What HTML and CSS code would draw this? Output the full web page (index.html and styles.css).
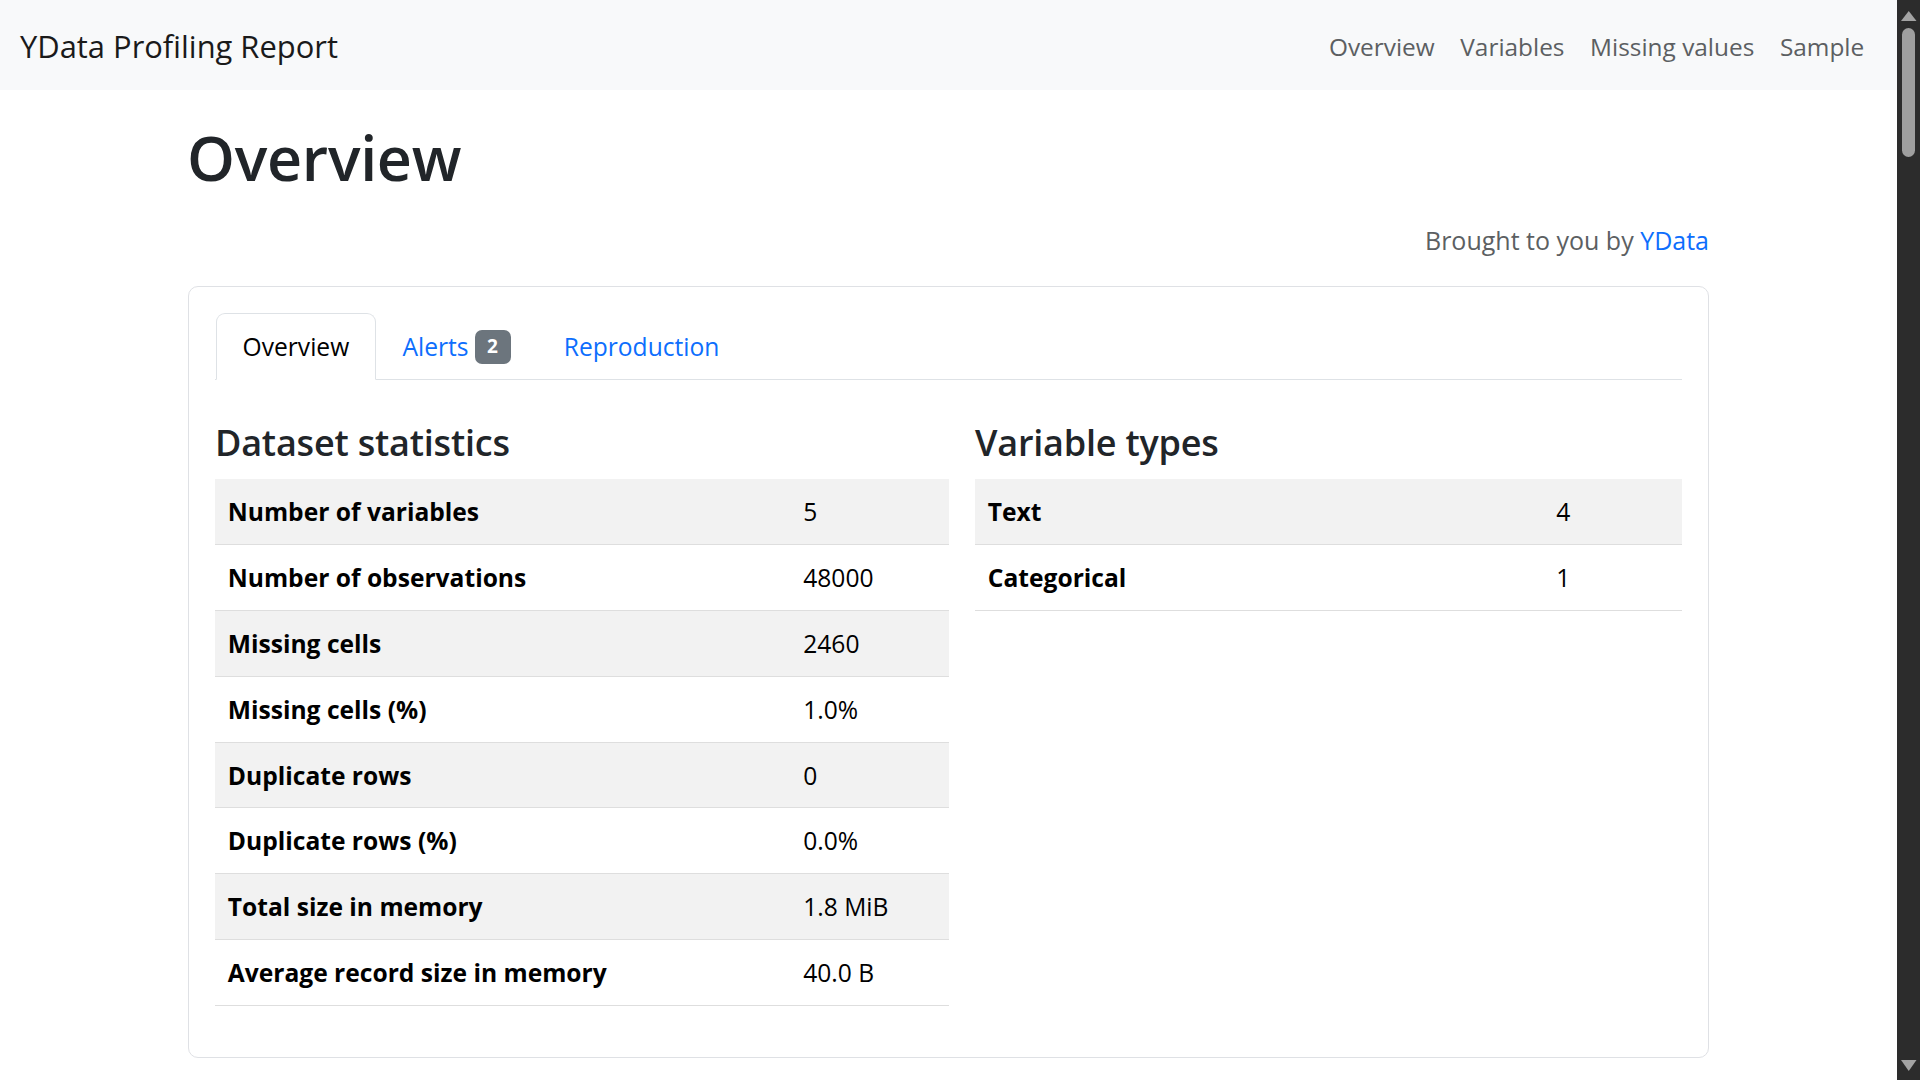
FILE: index.html
```html
<!DOCTYPE html>
<html lang="en">
<head>
<meta charset="utf-8">
<title>YData Profiling Report</title>
<link rel="stylesheet" href="styles.css">
</head>
<body>
<div class="page">
  <div class="viewport">
    <nav class="navbar">
      <a class="brand" href="#">YData Profiling Report</a>
      <ul class="nav-links">
        <li><a href="#">Overview</a></li>
        <li><a href="#">Variables</a></li>
        <li><a href="#">Missing values</a></li>
        <li><a href="#">Sample</a></li>
      </ul>
    </nav>
    <main class="container">
      <h1 class="title">Overview</h1>
      <p class="credit">Brought to you by <a href="#">YData</a></p>
      <section class="card">
        <ul class="tabs">
          <li class="tab active"><a href="#">Overview</a></li>
          <li class="tab"><a href="#">Alerts <span class="badge">2</span></a></li>
          <li class="tab"><a href="#">Reproduction</a></li>
        </ul>
        <div class="cols">
          <div class="col col-left">
            <h4 class="sub">Dataset statistics</h4>
            <table class="stats stats-left">
              <tbody>
                <tr><th>Number of variables</th><td>5</td></tr>
                <tr><th>Number of observations</th><td>48000</td></tr>
                <tr><th>Missing cells</th><td>2460</td></tr>
                <tr><th>Missing cells (%)</th><td>1.0%</td></tr>
                <tr><th>Duplicate rows</th><td>0</td></tr>
                <tr><th>Duplicate rows (%)</th><td>0.0%</td></tr>
                <tr><th>Total size in memory</th><td>1.8 MiB</td></tr>
                <tr><th>Average record size in memory</th><td>40.0 B</td></tr>
              </tbody>
            </table>
          </div>
          <div class="col col-right">
            <h4 class="sub">Variable types</h4>
            <table class="stats stats-right">
              <tbody>
                <tr><th>Text</th><td>4</td></tr>
                <tr><th>Categorical</th><td>1</td></tr>
              </tbody>
            </table>
          </div>
        </div>
      </section>
    </main>
  </div>
  <div class="scrollbar">
    <svg class="arrow" width="23" height="30" viewBox="0 0 23 30"><polygon points="4,21 19.5,21 11.75,11" fill="#a3a3a3"/></svg>
    <div class="thumb"></div>
    <div class="track-rest"></div>
    <svg class="arrow" width="23" height="20" viewBox="0 0 23 20"><polygon points="4,0 19.5,0 11.75,11" fill="#a3a3a3"/></svg>
  </div>
</div>
</body>
</html>
```

FILE: styles.css
```css
html, body {
  margin: 0;
  padding: 0;
  height: 1080px;
  overflow: hidden;
  background: #ffffff;
}

body {
  font-family: "Open Sans", "Noto Sans", "Liberation Sans", sans-serif;
  font-size: 24.6px;
  color: #212529;
}

a {
  text-decoration: none;
}

.page {
  display: flex;
  height: 1080px;
}

.viewport {
  flex: 1;
  min-width: 0;
  overflow: hidden;
}

/* navbar */
.navbar {
  height: 90px;
  background: #f8f9fa;
  display: flex;
  align-items: center;
  justify-content: space-between;
  padding: 0 20px 0 20px;
}

.brand {
  font-size: 30.9px;
  color: #1a1a1a;
  line-height: 44px;
  margin-top: 2px;
}

.nav-links {
  list-style: none;
  display: flex;
  margin: 0;
  padding: 0;
}

.nav-links a {
  display: block;
  padding: 0 12.8px;
  color: #5c5f62;
  font-size: 24.4px;
  line-height: 36px;
  margin-top: 4px;
}

/* main container */
.container {
  width: 1521px;
  margin: 0 auto;
}

.title {
  font-size: 61px;
  font-weight: 600;
  line-height: 70px;
  margin: 33px 0 0 -1px;
  color: #212529;
  letter-spacing: -0.3px;
}

.credit {
  text-align: right;
  font-size: 25px;
  margin: 30px 0 0 0;
  line-height: 35px;
  color: #5c5f62;
}

.credit a {
  color: #0d6efd;
}

/* card */
.card {
  margin-top: 28px;
  border: 1px solid #dfe1e5;
  border-radius: 10px;
  padding: 26px 26px 25px 26px;
  height: 772px;
  box-sizing: border-box;
}

.tabs {
  list-style: none;
  display: flex;
  margin: 0;
  padding: 0 0 0 1px;
  border-bottom: 1px solid #dee2e6;
  height: 66px;
}

.tab a {
  display: flex;
  align-items: center;
  height: 67px;
  box-sizing: border-box;
  padding: 0 25.6px;
  border: 1px solid transparent;
  border-radius: 9px 9px 0 0;
  color: #0d6efd;
  line-height: 38px;
}

.tab.active a {
  color: #000000;
  background: #ffffff;
  border-color: #dee2e6 #dee2e6 #ffffff;
}

.badge {
  display: inline-flex;
  align-items: center;
  justify-content: center;
  width: 36px;
  height: 34px;
  margin-left: 6px;
  border-radius: 7px;
  background: #6c757d;
  color: #ffffff;
  font-size: 19px;
  font-weight: 700;
  line-height: 1;
}

.cols {
  display: grid;
  grid-template-columns: 734px 1fr;
  column-gap: 26px;
  padding-top: 40px;
}

.sub {
  font-size: 36px;
  font-weight: 600;
  line-height: 46px;
  margin: 0 0 13px 0;
  color: #212529;
  letter-spacing: -0.2px;
}

.stats {
  width: 100%;
  border-collapse: collapse;
  table-layout: fixed;
  color: #000000;
}

.stats tr {
  height: 65.8px;
}

.stats tr:nth-child(odd) {
  background: #f2f2f2;
}

.stats th,
.stats td {
  text-align: left;
  padding: 0 12.8px;
  border-bottom: 1px solid #dedede;
  vertical-align: middle;
}

.stats th {
  font-weight: 700;
}

.stats td {
  font-weight: 400;
}

.stats-left td {
  width: 133px;
}

.stats-right td {
  width: 113px;
}

/* fake scrollbar */
.scrollbar {
  width: 23px;
  flex: none;
  background: #2c2c2c;
  display: flex;
  flex-direction: column;
  align-items: center;
}

.arrow {
  display: block;
  flex: none;
}

.thumb {
  width: 13px;
  height: 129px;
  margin-top: -2px;
  border-radius: 7px;
  background: #9f9f9f;
  flex: none;
}

.track-rest {
  flex: 1;
}
```
